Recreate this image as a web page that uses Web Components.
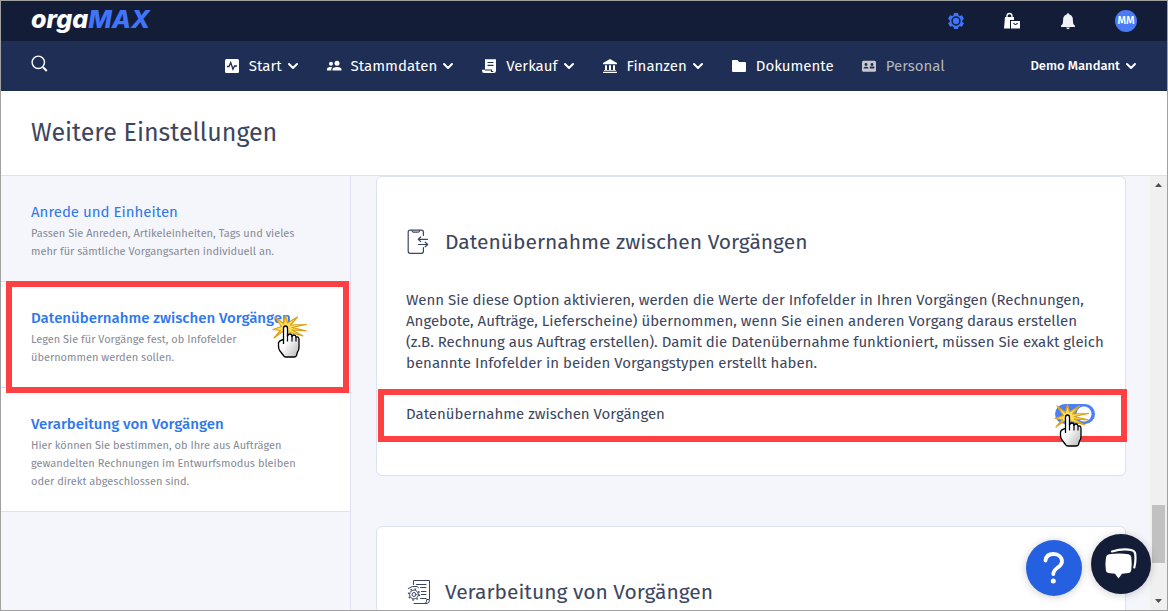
<!DOCTYPE html>
<html lang="de">
<head>
<meta charset="utf-8">
<meta name="viewport" content="width=device-width, initial-scale=1">
<title>orgaMAX – Weitere Einstellungen</title>
<style>
html, body { margin: 0; height: 100%; }
body { font-family: "Fira Sans", "Noto Sans", sans-serif; color: #3d4660; overflow: hidden; }
</style>
</head>
<body>
<settings-app></settings-app>

<template id="t-app">
<style>
:host { display: flex; flex-direction: column; height: 100vh; box-sizing: border-box; border: 1px solid #a0a0a0; background: #fff; position: relative; }
h1 { margin: 0; padding: 26px 30px; font-size: 25px; line-height: 32px; font-weight: 400; color: #3d4660; border-bottom: 1px solid #dfe1ef; }
.body { flex: 1; display: flex; min-height: 0; background: #f5f6fb; }
aside { flex: 0 0 349px; border-right: 1px solid #dfe1ef; position: relative; }
main { flex: 1; min-width: 0; overflow: hidden; padding: 0 24px 0 25px; display: flex; flex-direction: column; gap: 50px; }
p { margin: 0 0 30px; font-size: 15px; line-height: 21px; white-space: nowrap; }
.fabs { position: absolute; right: 16px; bottom: 14px; display: flex; align-items: center; gap: 9px; }
.fabs button { border: 0; padding: 0; border-radius: 50%; display: block; box-shadow: 0 1px 8px rgba(0,0,0,.2); }
.help { width: 56px; height: 56px; background: #2560e0; }
.chat { width: 60px; height: 60px; background: #141d38; }
.fabs svg { display: block; margin: auto; }
.fabs .help { margin-top: 8px; }
</style>
<top-bar></top-bar>
<nav-bar></nav-bar>
<h1>Weitere Einstellungen</h1>
<div class="body">
  <aside>
    <side-item heading="Anrede und Einheiten">Passen Sie Anreden, Artikeleinheiten, Tags und vieles<br>mehr für sämtliche Vorgangsarten individuell an.</side-item>
    <side-item heading="Datenübernahme zwischen Vorgängen" active marked>Legen Sie für Vorgänge fest, ob Infofelder<br>übernommen werden sollen.</side-item>
    <side-item heading="Verarbeitung von Vorgängen" active>Hier können Sie bestimmen, ob Ihre aus Aufträgen<br>gewandelten Rechnungen im Entwurfsmodus bleiben<br>oder direkt abgeschlossen sind.</side-item>
  </aside>
  <main>
    <setting-card heading="Datenübernahme zwischen Vorgängen">
      <svg slot="icon" width="24" height="26" viewBox="0 0 24 26" fill="none" stroke="#3d4660" stroke-width="1.2" stroke-linecap="round" stroke-linejoin="round"><path d="M16.4 6.5V3.2Q16.4 1.2 14.4 1.2H3.2Q1.200 1.200 1.200 3.200V22.300Q1.200 24.300 3.200 24.300H14.400Q16.400 24.300 16.400 22.300V18.500"/><path d="M5 1.500Q5.200 3.200 6.500 3.200H11Q12.400 3.200 12.600 1.500"/><path d="M20.500 10.300H11.500M13.700 8L11.300 10.300L13.700 12.600M11.500 15.500H20.500M18.200 13.200L20.700 15.500L18.200 17.800"/></svg>
      <p>Wenn Sie diese Option aktivieren, werden die Werte der Infofelder in Ihren Vorgängen (Rechnungen,<br>Angebote, Aufträge, Lieferscheine) übernommen, wenn Sie einen anderen Vorgang daraus erstellen<br>(z.B. Rechnung aus Auftrag erstellen). Damit die Datenübernahme funktioniert, müssen Sie exakt gleich<br>benannte Infofelder in beiden Vorgangstypen erstellt haben.</p>
      <toggle-row label="Datenübernahme zwischen Vorgängen"></toggle-row>
    </setting-card>
    <setting-card heading="Verarbeitung von Vorgängen">
      <svg slot="icon" width="24" height="26" viewBox="0 0 24 26" fill="none" stroke="#3d4660" stroke-width="1" stroke-linecap="round" stroke-linejoin="round"><path d="M6.500 5.500V1.500H22.500V19.500M7 24.500H20Q22.500 24.500 22.500 20.500H19.500V22.500Q19.500 24.500 17.500 24.500M9.500 5.500H19M13.500 8.500H19M14.500 12.500H19M14.500 15.500H19M13.500 19.500H19"/><circle cx="7" cy="15.500" r="2"/><circle cx="7" cy="15.500" r="4.400"/><circle cx="7" cy="15.500" r="5.500" stroke-dasharray="1.500 2.820" stroke-linecap="butt" stroke-width="1.500"/><path d="M1.200 9.500Q5 6.500 10 7.500L11.500 8.800"/></svg>
    </setting-card>
  </main>
  <scroll-track></scroll-track>
</div>
<div class="fabs">
  <button class="help" aria-label="Hilfe"><svg width="26" height="36" viewBox="0 0 26 36" fill="none" stroke="#fff" stroke-width="3.800" stroke-linecap="round"><path d="M4.500 10.500C5 6 8.500 4 12.500 4C17.500 4 21 7 21 11.500C21 17.500 12.300 17.500 12.300 24"/><circle cx="12.300" cy="31" r="2.500" fill="#fff" stroke="none"/></svg></button>
  <button class="chat" aria-label="Chat"><svg width="34" height="32" viewBox="0 0 34 32"><path d="M8 3.500C15 1.300 23 1 28 2.200Q31 3 31.200 6C31.800 11 31.500 15 30.300 19.500" fill="none" stroke="#fff" stroke-width="2.200" stroke-linecap="round"/><path d="M5 6.300Q15 4.800 24.500 6.300Q27 6.700 27.300 9.200Q28.200 15.500 27.200 22.500Q26.900 24.600 24.600 24.900L18 25.700L14.500 30.500L11 25.700L4.500 24.900Q2.200 24.600 1.900 22.500Q.9 15.500 2 9.200Q2.400 6.700 5 6.300Z" fill="#fff"/></svg></button>
</div>
</template>

<template id="t-top">
<style>
:host { display: flex; align-items: center; justify-content: space-between; height: 40px; padding: 0 30px; background: #141d38; flex: none; }
a { font: italic 800 25px/30px Inter, sans-serif; color: #fff; text-decoration: none; padding-bottom: 4px; }
a span { color: #3f74fb; }
.tools { display: flex; align-items: center; gap: 38px; }
button { border: 0; background: none; padding: 0; display: block; }
svg { display: block; }
.avatar { width: 22px; height: 22px; border-radius: 50%; background: #4a7bf5; color: #fff; font: 500 11px/22px "Fira Sans", "Noto Sans", sans-serif; text-align: center; }
</style>
<a href="#">orga<span>MAX</span></a>
<div class="tools">
  <button aria-label="Einstellungen"><svg width="18" height="18" viewBox="0 0 18 18"><g fill="#3f74fb"><circle cx="9" cy="9" r="6.300"/><path d="M7 1h4l.6 3H6.400zM7 17h4l.6-3H6.400z"/><path d="M7 1h4l.6 3H6.400zM7 17h4l.6-3H6.400z" transform="rotate(60 9 9)"/><path d="M7 1h4l.6 3H6.400zM7 17h4l.6-3H6.400z" transform="rotate(120 9 9)"/></g><circle cx="9" cy="9" r="3.900" fill="none" stroke="#141d38" stroke-width="1.500"/></svg></button>
  <button aria-label="Shop"><svg width="18" height="18" viewBox="0 0 18 18"><path d="M4 5V4a2.500 2.500 0 0 1 5 0v1" fill="none" stroke="#fff" stroke-width="1.300"/><path d="M2 5h9v3H7v8.500H1z" fill="#fff"/><path d="M8 9h9v7.500H8z" fill="#fff"/><path d="M10.500 11q2 3 4 0" fill="none" stroke="#141d38" stroke-width="1.200"/></svg></button>
  <button aria-label="Benachrichtigungen"><svg width="18" height="18" viewBox="0 0 18 18" fill="#eff1f7"><path d="M9 1.200a1.300 1.300 0 0 1 1.300 1.200C13 3 13.900 5.200 13.900 7.500c0 4 .6 5 2.100 6.200V15H2v-1.300C3.500 12.500 4.100 11.500 4.100 7.500c0-2.300.9-4.500 3.600-5.100A1.300 1.300 0 0 1 9 1.200zM7.300 15.500h3.400a1.700 1.700 0 0 1-3.400 0z"/></svg></button>
  <button class="avatar">MM</button>
</div>
</template>

<template id="t-nav">
<style>
:host { display: flex; align-items: center; justify-content: space-between; height: 50px; padding: 0 30px; background: #1f2e55; flex: none; color: #fff; }
button { border: 0; background: none; padding: 0; display: flex; align-items: center; color: inherit; }
.search { margin-bottom: 6px; }
nav { display: flex; gap: 27px; margin-left: 90px; }
.client { gap: 5px; font: 500 13px/20px "Fira Sans", "Noto Sans", sans-serif; }
</style>
<button class="search" aria-label="Suchen"><svg width="17" height="17" viewBox="0 0 17 17" fill="none" stroke="#fff"><circle cx="7.300" cy="7.300" r="6.200" stroke-width="1.400"/><path d="M12 12.200L15.800 16" stroke-width="2"/></svg></button>
<nav>
  <nav-item menu label="Start"><svg width="16" height="16" viewBox="0 0 16 16"><rect x="1" y="1" width="14" height="14" rx="1.500" fill="#fff"/><path d="M3 8.500H5L6.700 4.500L9 11.200L10.500 8H13" fill="none" stroke="#1f2e55" stroke-width="1.300"/></svg></nav-item>
  <nav-item menu label="Stammdaten"><svg width="16" height="16" viewBox="0 0 16 16" fill="#fff"><circle cx="5" cy="5.700" r="2"/><circle cx="11" cy="5.200" r="2.500"/><path d="M1 12.500V11c0-2 3.200-2.300 5.200-2C5.500 9.700 5.300 10.500 5.300 12.500zM6.500 12.500V11.300c0-3 9-3 9 0v1.200z"/></svg></nav-item>
  <nav-item menu label="Verkauf"><svg width="16" height="16" viewBox="0 0 16 16"><path d="M4 1.200H15V12.500Q15 15 12.500 15H3Q1 15 1 12.500V11.700H4Z" fill="#fff"/><path d="M6.500 4.500H12.500M6.500 7.300H12.500M4 12H10.500V13.500H12.300" fill="none" stroke="#1f2e55" stroke-width="1.200"/></svg></nav-item>
  <nav-item menu label="Finanzen"><svg width="16" height="16" viewBox="0 0 16 16" fill="#fff"><path d="M8 1L15 5V6.200H1V5zM3 7.200H5V12H3zM7 7.200H9V12H7zM11 7.200H13V12H11zM2 12H14V12.800H2zM1 13.700H15V15H1z"/></svg></nav-item>
  <nav-item label="Dokumente"><svg width="16" height="16" viewBox="0 0 16 16" fill="#fff"><path d="M2 2H6.500L8 4H14Q15 4 15 5V13Q15 14 14 14H2Q1 14 1 13V3Q1 2 2 2Z"/></svg></nav-item>
  <nav-item muted label="Personal"><svg width="16" height="16" viewBox="0 0 16 16"><rect x="1" y="2.700" width="14" height="11" rx="1.500" fill="#c6c8cd"/><g fill="#1f2e55"><circle cx="5" cy="6.500" r="1.400"/><path d="M2.500 10.500c0-2.500 5-2.500 5 0z"/><circle cx="11" cy="6.500" r="1.400"/><path d="M8.800 8.500h4.500v2H8.800z"/></g></svg></nav-item>
</nav>
<button class="client">Demo Mandant <svg width="12" height="8" viewBox="0 0 12 8" fill="none" stroke="#fff" stroke-width="2" stroke-linecap="round" stroke-linejoin="round"><path d="M2 2L6 6L10 2"/></svg></button>
</template>

<template id="t-nav-item">
<style>
:host { display: block; }
a { display: flex; align-items: center; color: #fff; text-decoration: none; font-size: 15px; font-weight: 400; line-height: 20px; white-space: nowrap; }
:host([muted]) a { color: #b3b6be; }
span { margin-left: 9px; }
.chev { display: none; margin-left: 5px; }
:host([menu]) .chev { display: block; }
</style>
<a href="#"><slot></slot><span></span><svg class="chev" width="12" height="8" viewBox="0 0 12 8" fill="none" stroke="#fff" stroke-width="2" stroke-linecap="round" stroke-linejoin="round"><path d="M2 2L6 6L10 2"/></svg></a>
</template>

<template id="t-side">
<style>
:host { display: block; position: relative; padding: 26px 30px 20px; border-bottom: 1px solid #dfe1ef; font-size: 11px; line-height: 18px; color: #858a96; white-space: nowrap; }
:host([active]) { background: #fff; }
a { display: block; margin-bottom: 3px; font-size: 15px; line-height: 20px; color: #2f77ee; text-decoration: none; }
:host([active]) a { font-weight: 500; }
.mark { display: none; position: absolute; inset: -1px 1px -6px 5px; border: 6px solid #ff4043; pointer-events: none; z-index: 1; }
click-hand { display: none; position: absolute; left: 271px; top: 32px; z-index: 2; }
:host([marked]) .mark, :host([marked]) click-hand { display: block; }
</style>
<a href="#"></a><slot></slot><div class="mark"></div><click-hand></click-hand>
</template>

<template id="t-card">
<style>
:host { display: block; flex: none; background: #fff; border: 1px solid #dde1ee; border-radius: 6px; padding: 49px 30px 51px 29px; }
header { display: flex; align-items: center; gap: 14px; margin-bottom: 32px; padding-left: 1px; }
h2 { margin: 0; font-size: 21px; line-height: 32px; font-weight: 400; }
</style>
<header><slot name="icon"></slot><h2></h2></header>
<slot></slot>
</template>

<template id="t-toggle">
<style>
:host { display: flex; justify-content: space-between; align-items: center; position: relative; height: 20px; font-size: 15px; line-height: 20px; }
input { appearance: none; margin: 0; width: 40px; height: 20px; border-radius: 10px; background: radial-gradient(circle at 29px 10px, #fff 7px, #4a7ff8 8px); }
.mark { position: absolute; inset: -15px -32px -18px -28px; border: 6px solid #ff4043; pointer-events: none; }
click-hand { position: absolute; right: 3px; top: -1px; }
</style>
<label for="t"></label><input id="t" type="checkbox" role="switch" checked>
<div class="mark"></div><click-hand></click-hand>
</template>

<template id="t-hand">
<style>
:host { display: block; pointer-events: none; }
svg { display: block; }
</style>
<svg width="38" height="46" viewBox="0 0 38 46">
  <path d="M3 3L11.500 9.500L13.500 1.500L15.500 9L25.500 3L18.500 11L34.500 10.500L20 13.500L34 16.800L20 16L31 22L17 18L10 18L2 24L8.500 16.500L1 15.500L9.500 12.500Z" fill="#ffdf5a" stroke="#dca21a" stroke-width="1.200" stroke-linejoin="round"/>
  <path d="M11.500 30V14.500Q11.500 12 13.500 12Q15.500 12 15.500 14.500V22Q16 20 18 20Q20 20 20 22.500Q20.500 21 22 21Q23.800 21 24 23Q26.500 22.200 27 25V33.500Q27 36 25.500 38L24.500 41.500Q24 43 22 43H14Q12 43 11.500 41.500L8 37Q6.500 35 6.500 32V29Q7 26.500 11.500 25.500" fill="url(#shade)" stroke="#000" stroke-width="1.300" stroke-linejoin="round"/>
  <path d="M15.500 21V27.500M20 22V27.500M24 23V27.500" stroke="#000" stroke-width="1.200"/>
  <defs><linearGradient id="shade" x1="0" y1="0" x2="1" y2="1"><stop offset=".45" stop-color="#fff"/><stop offset="1" stop-color="#b5b5b5"/></linearGradient></defs>
</svg>
</template>

<template id="t-scroll">
<style>
:host { display: flex; flex-direction: column; align-items: center; width: 17px; background: #f0f0f0; flex: none; }
svg { display: block; flex: none; }
.space { flex: 312; }
.thumb { width: 13px; background: #c1c1c1; flex: 58; }
.rest { flex: 30; }
</style>
<svg width="17" height="17" viewBox="0 0 17 17"><path d="M5 11L8.500 7L12 11Z" fill="#505050"/></svg>
<div class="space"></div><div class="thumb"></div><div class="rest"></div>
<svg width="17" height="17" viewBox="0 0 17 17"><path d="M5 6L8.500 10L12 6Z" fill="#505050"/></svg>
</template>

<script>
const component = (name, templateId, setup) => customElements.define(name, class extends HTMLElement {
  constructor() {
    super();
    this.attachShadow({ mode: "open" }).append(document.getElementById(templateId).content.cloneNode(true));
  }
  connectedCallback() { if (setup) setup(this, this.shadowRoot); }
});
const fill = (selector, attribute) => (host, root) => {
  root.querySelector(selector).textContent = host.getAttribute(attribute);
};
component("click-hand", "t-hand");
component("scroll-track", "t-scroll");
component("toggle-row", "t-toggle", fill("label", "label"));
component("setting-card", "t-card", fill("h2", "heading"));
component("side-item", "t-side", fill("a", "heading"));
component("nav-item", "t-nav-item", fill("span", "label"));
component("nav-bar", "t-nav");
component("top-bar", "t-top");
component("settings-app", "t-app");
</script>
</body>
</html>
